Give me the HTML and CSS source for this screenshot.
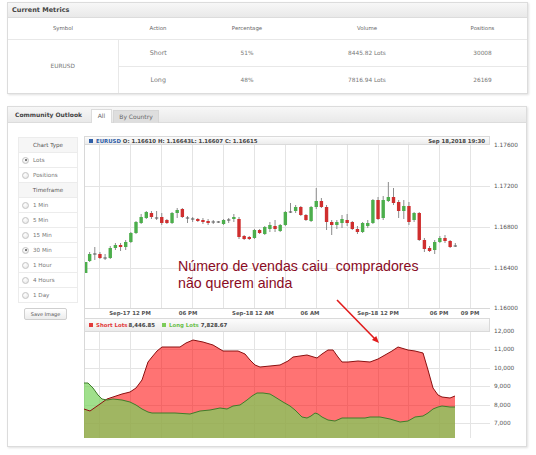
FILE: index.html
```html
<!DOCTYPE html>
<html>
<head>
<meta charset="utf-8">
<link rel="stylesheet" href="styles.css">
</head>
<body>
<section class="panel metrics">
  <header class="panel-head">Current Metrics</header>
  <table class="mt">
    <colgroup><col class="c1"><col class="c2"><col class="c3"><col class="c4"><col class="c5"></colgroup>
    <thead><tr><th>Symbol</th><th>Action</th><th>Percentage</th><th>Volume</th><th>Positions</th></tr></thead>
    <tbody>
      <tr><td rowspan="2" class="sym">EURUSD</td><td class="act">Short</td><td>51%</td><td>8445.82 Lots</td><td>30008</td></tr>
      <tr><td class="act">Long</td><td>48%</td><td>7816.94 Lots</td><td>26169</td></tr>
    </tbody>
  </table>
</section>

<section class="panel outlook">
  <header class="panel-head tabs-head">
    <span class="title">Community Outlook</span>
    <span class="tab active">All</span>
    <span class="tab">By Country</span>
  </header>
  <div class="outlook-body">
    <aside class="sidebar">
      <div class="side-box">
        <div class="row head">Chart Type</div>
        <div class="row"><span class="radio on"></span>Lots</div>
        <div class="row"><span class="radio"></span>Positions</div>
        <div class="row head">Timeframe</div>
        <div class="row"><span class="radio"></span>1 Min</div>
        <div class="row"><span class="radio"></span>5 Min</div>
        <div class="row"><span class="radio"></span>15 Min</div>
        <div class="row"><span class="radio on"></span>30 Min</div>
        <div class="row"><span class="radio"></span>1 Hour</div>
        <div class="row"><span class="radio"></span>4 Hours</div>
        <div class="row"><span class="radio"></span>1 Day</div>
      </div>
      <button class="save">Save Image</button>
    </aside>

    <div class="chart">
      <div class="strip strip1">
        <span class="sq blue"></span><span class="blue-t">EURUSD</span>&nbsp;<span>O: 1.16610 H: 1.16643L: 1.16607 C: 1.16615</span>
        <span class="right">Sep 18,2018 19:30</span>
      </div>
      <svg class="plot1" width="440" height="173" viewBox="0 0 440 173">
        <path class="grid" d="M15.5 0V163M46.5 0V163M77.5 0V163M108.5 0V163M139.5 0V163M170.5 0V163M201.5 0V163M232.5 0V163M263.5 0V163M294.5 0V163M324.5 0V163M355.5 0V163M386.5 0V163M0 41.5H406M0 82.5H406M0 123.5H406"/>
        <path class="axis" d="M0.5 0V173M0 163.5H406"/>
        <path class="wick" d="M5.65 107V117M10.8 102V115M15.95 107V114M21.1 109V115M26.25 101V114M31.4 98V105M36.55 98V106M41.7 95V105M46.85 87V98M52 76V89M57.15 69V79M62.3 66V74M67.45 66V74M72.6 66V75M77.75 68V80M82.9 74V79M88.05 67V79M93.2 63V73M98.35 63V73M103.5 71V78M108.65 72V77M113.8 73V77M118.95 73V79M124.1 74V80M129.25 75V79M134.4 76V78M139.55 74V80M144.7 73V78M149.85 69V77M155 72V94M160.15 90V95M165.3 91V95M170.45 84V94M175.6 84V89M180.75 81V90M185.9 77V87M191.05 75V87M196.2 79V87M201.35 66V81M206.5 58V68M211.65 60V68M216.8 61V71M221.95 69V76M227.1 61V77M232.25 43V64M237.4 53V63M242.55 60V85M247.7 75V90M252.85 75V84M258 70V83M263.15 69V81M268.3 76V85M273.45 81V89M278.6 77V88M283.75 75V83M288.9 54V79M294.05 52V75M299.2 51V75M304.35 37V57M309.5 43V60M314.65 55V73M319.8 55V74M324.95 57V80M330.1 67V77M335.25 67V96M340.4 93V107M345.55 101V107M350.7 95V109M355.85 91V98M361 90V98M366.15 95V103M371.3 98V102"/>
        <g class="up">
          <rect x="1" y="117" width="2.4" height="11"/>
          <rect x="3.95" y="109" width="3.4" height="7"/>
          <rect x="24.55" y="103" width="3.4" height="10"/>
          <rect x="29.7" y="100" width="3.4" height="3"/>
          <rect x="40" y="97" width="3.4" height="5"/>
          <rect x="45.15" y="88" width="3.4" height="9"/>
          <rect x="50.3" y="77" width="3.4" height="11"/>
          <rect x="55.45" y="72" width="3.4" height="6"/>
          <rect x="60.6" y="67" width="3.4" height="6"/>
          <rect x="86.35" y="68" width="3.4" height="10"/>
          <rect x="91.5" y="65" width="3.4" height="3"/>
          <rect x="137.85" y="75" width="3.4" height="4"/>
          <rect x="148.15" y="72" width="3.4" height="2"/>
          <rect x="168.75" y="85" width="3.4" height="8"/>
          <rect x="179.05" y="82" width="3.4" height="7"/>
          <rect x="184.2" y="80" width="3.4" height="4"/>
          <rect x="194.5" y="80" width="3.4" height="6"/>
          <rect x="199.65" y="67" width="3.4" height="13"/>
          <rect x="209.95" y="62" width="3.4" height="4"/>
          <rect x="225.4" y="62" width="3.4" height="14"/>
          <rect x="230.55" y="56" width="3.4" height="6"/>
          <rect x="251.15" y="77" width="3.4" height="3"/>
          <rect x="256.3" y="74" width="3.4" height="4"/>
          <rect x="276.9" y="78" width="3.4" height="9"/>
          <rect x="282.05" y="78" width="3.4" height="3"/>
          <rect x="287.2" y="55" width="3.4" height="23"/>
          <rect x="297.5" y="55" width="3.4" height="18"/>
          <rect x="302.65" y="52" width="3.4" height="4"/>
          <rect x="318.1" y="61" width="3.4" height="5"/>
          <rect x="328.4" y="68" width="3.4" height="7"/>
          <rect x="349" y="97" width="3.4" height="8"/>
          <rect x="354.15" y="93" width="3.4" height="4"/>
        </g>
        <g class="down">
          <rect x="14.25" y="109" width="3.4" height="4"/>
          <rect x="34.85" y="100" width="3.4" height="2"/>
          <rect x="65.75" y="68" width="3.4" height="4"/>
          <rect x="76.05" y="72" width="3.4" height="6"/>
          <rect x="81.2" y="75" width="3.4" height="3"/>
          <rect x="96.65" y="64" width="3.4" height="8"/>
          <rect x="112.1" y="74" width="3.4" height="2"/>
          <rect x="117.25" y="75" width="3.4" height="2"/>
          <rect x="122.4" y="76" width="3.4" height="2"/>
          <rect x="153.3" y="74" width="3.4" height="18"/>
          <rect x="158.45" y="91" width="3.4" height="3"/>
          <rect x="163.6" y="92" width="3.4" height="2"/>
          <rect x="173.9" y="85" width="3.4" height="3"/>
          <rect x="189.35" y="81" width="3.4" height="3"/>
          <rect x="215.1" y="62" width="3.4" height="8"/>
          <rect x="220.25" y="70" width="3.4" height="5"/>
          <rect x="235.7" y="56" width="3.4" height="6"/>
          <rect x="240.85" y="62" width="3.4" height="15"/>
          <rect x="246" y="77" width="3.4" height="3"/>
          <rect x="261.45" y="75" width="3.4" height="3"/>
          <rect x="266.6" y="77" width="3.4" height="7"/>
          <rect x="271.75" y="84" width="3.4" height="3"/>
          <rect x="292.35" y="55" width="3.4" height="19"/>
          <rect x="307.8" y="52" width="3.4" height="6"/>
          <rect x="312.95" y="57" width="3.4" height="9"/>
          <rect x="323.25" y="61" width="3.4" height="16"/>
          <rect x="333.55" y="68" width="3.4" height="27"/>
          <rect x="338.7" y="95" width="3.4" height="9"/>
          <rect x="343.85" y="103" width="3.4" height="3"/>
          <rect x="359.3" y="93" width="3.4" height="3"/>
          <rect x="364.45" y="96" width="3.4" height="6"/>
        </g>
        <g class="doji">
          <rect x="9.1" y="108.5" width="3.4" height="1"/>
          <rect x="19.4" y="112.5" width="3.4" height="1"/>
          <rect x="70.9" y="72.5" width="3.4" height="1"/>
          <rect x="101.8" y="72.5" width="3.4" height="1"/>
          <rect x="106.95" y="73.5" width="3.4" height="1"/>
          <rect x="127.55" y="76.5" width="3.4" height="1"/>
          <rect x="132.7" y="76.5" width="3.4" height="1"/>
          <rect x="143" y="74.5" width="3.4" height="1"/>
          <rect x="204.8" y="66.5" width="3.4" height="1"/>
          <rect x="369.6" y="100.5" width="3.4" height="1"/>
        </g>
        <g class="xl">
          <text x="46" y="170">Sep-17 12 PM</text>
          <text x="104" y="170">06 PM</text>
          <text x="169" y="170">Sep-18 12 AM</text>
          <text x="226" y="170">06 AM</text>
          <text x="294" y="170">Sep-18 12 PM</text>
          <text x="355" y="170">06 PM</text>
          <text x="386" y="170">09 PM</text>
        </g>
        <g class="yl">
          <text x="410" y="2">1.17600</text>
          <text x="410" y="43">1.17200</text>
          <text x="410" y="84">1.16800</text>
          <text x="410" y="125">1.16400</text>
          <text x="410" y="165">1.16000</text>
        </g>
      </svg>
      <div class="strip strip2">
        <span class="sq red"></span><span class="red-t">Short Lots</span><span class="val">8,446.85</span>
        <span class="sq green"></span><span class="green-t">Long Lots</span><span class="val">7,828.67</span>
      </div>
      <svg class="plot2" width="440" height="106" viewBox="0 0 440 106">
        <path class="grid" d="M15.5 0V106M46.5 0V106M77.5 0V106M108.5 0V106M139.5 0V106M170.5 0V106M201.5 0V106M232.5 0V106M263.5 0V106M294.5 0V106M324.5 0V106M355.5 0V106M386.5 0V106M0 17.5H406M0 36.5H406M0 54.5H406M0 73.5H406M0 91.5H406"/>
        <path class="axis" d="M0.5 0V106"/>
        <path class="short-area" d="M0 106L0 77L6 79L16 72L23 67L29 65L38 62L46 60L52 56L58 48L62 36L64 30L68 25L73 19L78 15L86 15L96 15L102 11L109 8L119 10L129 13L139 19L154 19L161 22L166 28L171 33L176 35L186 34L196 33L204 29L209 25L216 24L223 23L233 26L238 22L244 18L249 18L254 25L258 30L264 30L274 29L286 30L294 27L301 23L308 19L314 15L324 18L331 19L339 21L344 38L349 56L354 63L358 65L366 66L371 64L371 106Z"/>
        <path class="long-area" d="M0 106L0 51L4 51L9 56L14 63L18 67L23 68L29 67L38 68L46 70L52 73L58 77L64 80L68 81L79 81L91 81L106 82L116 79L126 78L136 76L143 77L149 74L156 73L163 68L168 64L173 61L179 61L186 62L191 65L199 70L206 74L211 78L218 85L223 86L227 84L231 81L234 82L238 85L244 88L251 89L258 86L266 86L274 86L281 86L286 85L296 85L306 87L316 90L324 89L331 85L339 84L344 81L349 77L354 75L358 74L366 75L371 75L371 106Z"/>
        <path class="short-line" d="M0 77L6 79L16 72L23 67L29 65L38 62L46 60L52 56L58 48L62 36L64 30L68 25L73 19L78 15L86 15L96 15L102 11L109 8L119 10L129 13L139 19L154 19L161 22L166 28L171 33L176 35L186 34L196 33L204 29L209 25L216 24L223 23L233 26L238 22L244 18L249 18L254 25L258 30L264 30L274 29L286 30L294 27L301 23L308 19L314 15L324 18L331 19L339 21L344 38L349 56L354 63L358 65L366 66L371 64"/>
        <path class="long-line" d="M0 51L4 51L9 56L14 63L18 67L23 68L29 67L38 68L46 70L52 73L58 77L64 80L68 81L79 81L91 81L106 82L116 79L126 78L136 76L143 77L149 74L156 73L163 68L168 64L173 61L179 61L186 62L191 65L199 70L206 74L211 78L218 85L223 86L227 84L231 81L234 82L238 85L244 88L251 89L258 86L266 86L274 86L281 86L286 85L296 85L306 87L316 90L324 89L331 85L339 84L344 81L349 77L354 75L358 74L366 75L371 75"/>
        <g class="yl">
          <text x="410" y="0.7">12,000</text>
          <text x="410" y="19.2">11,000</text>
          <text x="410" y="38.2">10,000</text>
          <text x="410" y="56.2">9,000</text>
          <text x="410" y="75.2">8,000</text>
          <text x="410" y="93.2">7,000</text>
          <text x="410" y="111.5">6,000</text>
        </g>
      </svg>
    </div>
  </div>

  <div class="note">Número de vendas caiu&nbsp; compradores<br>não querem ainda</div>
  <svg class="arrow" width="56" height="52" viewBox="0 0 56 52">
    <path d="M7 4L45 43" />
    <polygon points="49,47 41.95,44.1 46.25,39.9"/>
  </svg>
</section>
</body>
</html>
```

FILE: styles.css
```css
* { box-sizing: border-box; margin: 0; padding: 0; }
html, body { background: #fff; }
body {
  font-family: "DejaVu Sans", Verdana, sans-serif;
  color: #666;
  padding: 2px 8px 0 7px;
  width: 536px;
  height: 455px;
  overflow: hidden;
}

.panel {
  border: 1px solid #dcdcdc;
  background: #fff;
  box-shadow: 1px 1px 2px rgba(0, 0, 0, 0.12);
}
.panel-head {
  height: 15px;
  background: linear-gradient(#f7f7f7, #e9e9e9);
  border-bottom: 1px solid #dcdcdc;
  font-weight: bold;
  color: #444;
}

/* Current metrics */
.metrics { width: 521px; }
.metrics .panel-head { font-size: 6.5px; line-height: 14px; padding-left: 4px; }
.mt { width: 100%; border-collapse: collapse; table-layout: fixed; }
.mt .c1 { width: 110px; }
.mt .c2 { width: 80px; }
.mt .c3 { width: 98px; }
.mt .c4 { width: 142px; }
.mt .c5 { width: 89px; }
.mt th {
  height: 21px;
  font-weight: normal;
  font-size: 5.4px;
  color: #666;
  border-bottom: 1px solid #e8e8e8;
}
.mt td {
  height: 27px;
  text-align: center;
  font-size: 5.8px;
  color: #777;
  border-bottom: 1px solid #e8e8e8;
}
.mt tr:last-child td { border-bottom: 0; }
.mt td.sym { border-right: 1px solid #e8e8e8; border-bottom: 0; }
.mt td.act { font-size: 6.4px; }

/* Community outlook */
.outlook {
  position: relative;
  width: 520px;
  height: 341px;
  margin-top: 12px;
}
.tabs-head {
  height: 16px;
  display: flex;
  align-items: flex-end;
  padding-left: 7px;
}
.tabs-head .title {
  width: 76px;
  align-self: center;
  font-size: 6px;
  line-height: 15px;
}
.tab {
  height: 13px;
  margin-bottom: -1px;
  font-size: 6px;
  font-weight: normal;
  line-height: 12px;
  text-align: center;
  color: #666;
  background: #dedede;
  border: 1px solid #d6d6d6;
  border-bottom: 0;
  margin-right: 1px;
}
.tab:nth-of-type(2) { width: 21px; }
.tab:nth-of-type(3) { width: 46px; }
.tab.active { background: #fff; border-color: #dcdcdc; height: 14px; }

.outlook-body {
  display: flex;
  gap: 6px;
  padding: 13px 0 0 10px;
}

.sidebar { width: 60px; flex: none; padding-top: 1px; }
.side-box { border: 1px solid #ececec; border-bottom: 0; }
.row {
  height: 15px;
  border-bottom: 1px solid #ececec;
  font-size: 5.6px;
  display: flex;
  align-items: center;
  gap: 4px;
  padding-left: 3px;
  color: #777;
}
.row.head {
  justify-content: center;
  padding-left: 0;
  background: #f6f6f6;
  color: #555;
}
.radio {
  width: 7px;
  height: 7px;
  border-radius: 50%;
  border: 1px solid #c4c4c4;
  background: radial-gradient(circle at 40% 35%, #fff, #e2e2e2);
  position: relative;
}
.radio.on::after {
  content: "";
  position: absolute;
  left: 1.5px;
  top: 1.5px;
  width: 2px;
  height: 2px;
  border-radius: 50%;
  background: #555;
}
.save {
  display: block;
  margin: 5px 0 0 6px;
  width: 43px;
  height: 12px;
  font-family: inherit;
  font-size: 5px;
  color: #555;
  border: 1px solid #cfcfcf;
  border-radius: 2px;
  background: linear-gradient(#fff, #ececec);
}

.chart {
  width: 440px;
  height: 303px;
  overflow: hidden;
  display: flex;
  flex-direction: column;
  flex: none;
}
.strip {
  flex: none;
  width: 406px;
  border: 1px solid #dadada;
  background: linear-gradient(#fcfcfc, #ececec);
  font-size: 5.4px;
  font-weight: bold;
  color: #444;
  display: flex;
  align-items: center;
  padding: 0 4px;
  white-space: nowrap;
}
.strip1 { height: 9px; }
.strip2 { height: 14px; }
.strip .right { margin-left: auto; padding-right: 0; }
.sq { display: inline-block; width: 4px; height: 4px; margin-right: 3px; }
.sq.blue { background: #2f5fa8; }
.sq.red { background: #e23a3a; }
.sq.green { background: #7ccc5a; margin-left: 7px; }
.blue-t { color: #2f5fa8; }
.red-t { color: #e23a3a; margin-right: 1px; }
.green-t { color: #6cc04a; margin-right: 2px; }

svg { display: block; overflow: visible; flex: none; }
.grid { stroke: #e4e4e4; stroke-width: 1; fill: none; }
.axis { stroke: #d8d8d8; stroke-width: 1; fill: none; }
.wick { stroke: #8c8c8c; stroke-width: 1; fill: none; }
.up rect { fill: #4cae4c; }
.down rect { fill: #cf2e2e; }
.doji rect { fill: #555; }
.xl text {
  font-family: "DejaVu Sans", Verdana, sans-serif;
  font-size: 5.4px;
  font-weight: bold;
  fill: #555;
  text-anchor: middle;
}
.yl text {
  font-family: "DejaVu Sans", Verdana, sans-serif;
  font-size: 5.8px;
  fill: #555;
}
.short-area { fill: #ff0000; fill-opacity: 0.55; }
.long-area { fill: rgb(119, 211, 91); fill-opacity: 0.7; }
.short-line { fill: none; stroke: #8b1010; stroke-width: 1; }
.long-line { fill: none; stroke: #3f7d2a; stroke-width: 1; }

/* Annotation overlay */
.note {
  position: absolute;
  left: 170px;
  top: 151px;
  font-family: "Liberation Sans", Arial, sans-serif;
  font-size: 14.2px;
  line-height: 17px;
  color: #8a0b24;
  white-space: nowrap;
}
.arrow {
  position: absolute;
  left: 322px;
  top: 189px;
}
.arrow path { stroke: #e21b1b; stroke-width: 1.6; fill: none; }
.arrow polygon { fill: #e21b1b; }
```
